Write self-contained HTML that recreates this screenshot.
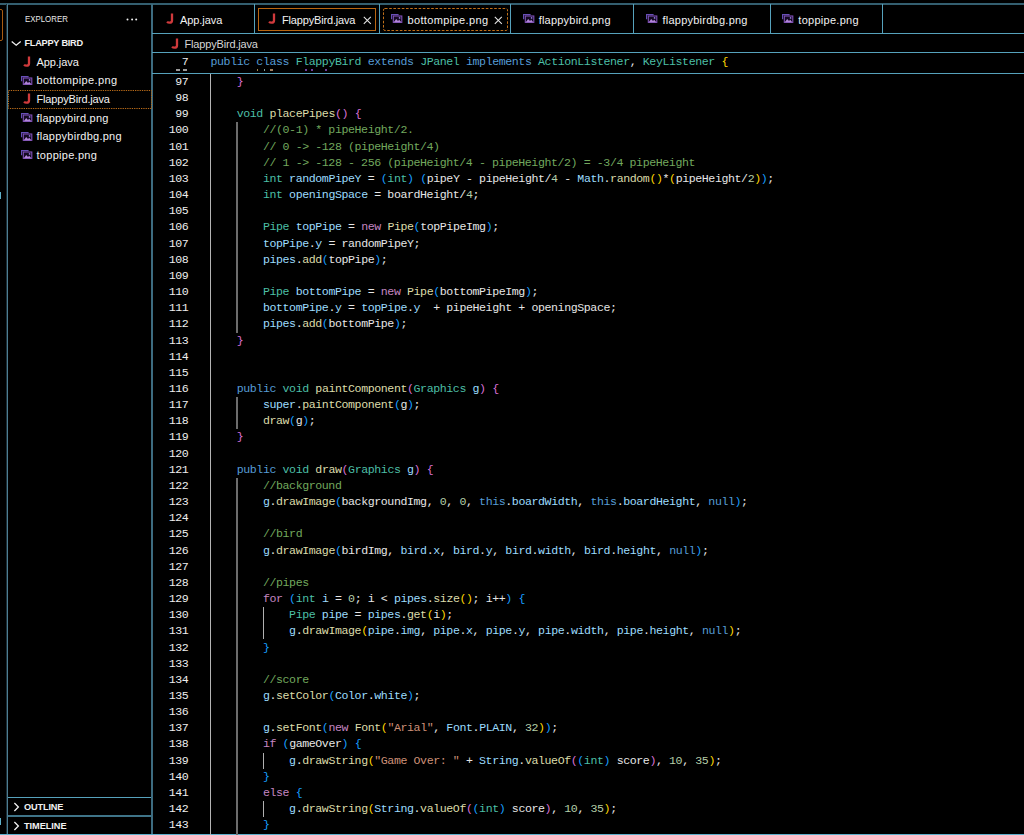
<!DOCTYPE html>
<html><head><meta charset="utf-8">
<style>
*{margin:0;padding:0;box-sizing:border-box}
html,body{width:1024px;height:835px;overflow:hidden;background:#000}
body{position:relative;font-family:"Liberation Sans",sans-serif;color:#f0f0f0}
.a{position:absolute}
.hb{position:absolute;background:#5aa9c4;height:1px}
.vb{position:absolute;background:#5aa9c4;width:1px}
.ui{position:absolute;font-size:11px;white-space:pre;line-height:14px;color:#f2f2f2}
.tab{position:absolute;top:4px;height:29px}
.code{position:absolute;font-family:"Liberation Mono",monospace;font-size:11.6px;letter-spacing:-0.41px;white-space:pre;line-height:16px;color:#e6e6e6}
.ln{position:absolute;font-family:"Liberation Mono",monospace;font-size:11.6px;letter-spacing:-0.41px;white-space:pre;line-height:16px;color:#eeeeee;text-align:right;width:60px;left:128.4px}
.k{color:#569cd6}.t{color:#4cbfa6}.c{color:#c586c0}.f{color:#dcdcaa}.v{color:#9cdcfe}
.cm{color:#72a85e}.n{color:#b5cea8}.s{color:#ce9178}
.b1{color:#ffd700}.b2{color:#da70d6}.b3{color:#179fff}
.g{position:absolute;width:1px;background:#b8b8b8}
</style></head><body>

<!-- global borders -->
<div class="a" style="left:0;top:3px;width:1024px;height:2px;background:#345f70"></div>
<div class="a" style="left:6px;top:4px;width:1px;height:831px;background:#1c2e36"></div><div class="a" style="left:7px;top:4px;width:1px;height:831px;background:#4d7d92"></div>
<div class="a" style="left:151px;top:4px;width:2px;height:831px;background:#3d6c80"></div>
<!-- activity bar active border -->
<div class="a" style="left:-4px;top:8.6px;width:7px;height:32px;border:1px solid #a85c12;border-radius:2px"></div>
<div class="a" style="left:0;top:192px;width:1px;height:7px;background:#5fb2ca"></div><div class="a" style="left:0;top:818px;width:1px;height:7px;background:#5fb2ca"></div>

<!-- sidebar -->
<div class="ui" style="left:24.8px;top:12.2px;font-size:9.6px;transform:scaleX(0.82);transform-origin:0 0;text-shadow:none;color:#e8e8e8">EXPLORER</div>
<svg class="a" style="left:124px;top:17px" width="16" height="5" viewBox="0 0 16 5"><circle cx="3.5" cy="2.6" r="1" fill="#f0f0f0"/><circle cx="8.1" cy="2.6" r="1" fill="#f0f0f0"/><circle cx="12.2" cy="2.6" r="1" fill="#f0f0f0"/></svg>

<svg class="a" style="left:11px;top:40px" width="11" height="7" viewBox="0 0 11 7"><path d="M0.7 1.6 L5.2 5.2 L9.7 1.6" fill="none" stroke="#f4f4f4" stroke-width="1.25"/></svg>
<div class="ui" style="left:24.5px;top:36px;font-size:9.2px;font-weight:bold;letter-spacing:-0.25px;text-shadow:none">FLAPPY BIRD</div>



<!-- outline / timeline -->
<div class="a" style="left:8px;top:797px;width:143px;height:1px;background:#56a2bc"></div>
<div class="a" style="left:8px;top:815px;width:143px;height:2px;background:#3f7488"></div>
<div class="a" style="left:0;top:834px;width:1024px;height:1px;background:#5eb0cc"></div>
<svg class="a" style="left:12px;top:802px" width="8" height="10" viewBox="0 0 8 10"><path d="M2.4 1 L6.4 5 L2.4 9" fill="none" stroke="#f4f4f4" stroke-width="1.25"/></svg>
<div class="ui" style="left:24px;top:800px;font-size:9.2px;font-weight:bold;letter-spacing:-0.15px">OUTLINE</div>
<svg class="a" style="left:12px;top:820.5px" width="8" height="10" viewBox="0 0 8 10"><path d="M2.4 1 L6.4 5 L2.4 9" fill="none" stroke="#f4f4f4" stroke-width="1.25"/></svg>
<div class="ui" style="left:24px;top:818.5px;font-size:9.2px;font-weight:bold;letter-spacing:-0.05px">TIMELINE</div>

<!-- tabs -->


<!-- breadcrumb / sticky -->
<div class="a" style="left:152px;top:33px;width:872px;height:1px;background:#56a2bc"></div>
<div class="a" style="left:152px;top:52px;width:872px;height:1px;background:#56a2bc"></div>
<div class="a" style="left:152px;top:73px;width:872px;height:1px;background:#56a2bc"></div>

<svg class="a" style="left:22.7px;top:55.5px" width="9" height="12" viewBox="0 0 9 12"><path d="M6 0.6 V7.4 Q6 9.7 3.6 9.7 Q1.9 9.7 1.1 8.6" fill="none" stroke="#d03a3c" stroke-width="2.3"/></svg>
<div class="ui" style="left:36.5px;top:54.70px;letter-spacing:-0.07px">App.java</div>
<svg class="a" style="left:20.6px;top:75.7px" width="12" height="10" viewBox="0 0 12 10"><path d="M0.6 5.2 V0.6 H7.6" fill="none" stroke="#6850b8" stroke-width="1.15"/><rect x="2.3" y="2" width="8.5" height="6.4" fill="#140a22" stroke="#8050b8" stroke-width="1.1"/><path d="M2.8 8.3 L5.2 5 L7 6.9 L8.2 5.8 L10.3 8.3 Z" fill="#b184d8"/><circle cx="8.6" cy="3.9" r="0.85" fill="#9078d8"/></svg>
<div class="ui" style="left:36.5px;top:73.30px;letter-spacing:0.36px">bottompipe.png</div>
<svg class="a" style="left:22.7px;top:92.7px" width="9" height="12" viewBox="0 0 9 12"><path d="M6 0.6 V7.4 Q6 9.7 3.6 9.7 Q1.9 9.7 1.1 8.6" fill="none" stroke="#d03a3c" stroke-width="2.3"/></svg>
<div class="ui" style="left:36.5px;top:91.90px;letter-spacing:-0.17px">FlappyBird.java</div>
<svg class="a" style="left:20.6px;top:112.9px" width="12" height="10" viewBox="0 0 12 10"><path d="M0.6 5.2 V0.6 H7.6" fill="none" stroke="#6850b8" stroke-width="1.15"/><rect x="2.3" y="2" width="8.5" height="6.4" fill="#140a22" stroke="#8050b8" stroke-width="1.1"/><path d="M2.8 8.3 L5.2 5 L7 6.9 L8.2 5.8 L10.3 8.3 Z" fill="#b184d8"/><circle cx="8.6" cy="3.9" r="0.85" fill="#9078d8"/></svg>
<div class="ui" style="left:36.5px;top:110.50px;letter-spacing:0.21px">flappybird.png</div>
<svg class="a" style="left:20.6px;top:131.5px" width="12" height="10" viewBox="0 0 12 10"><path d="M0.6 5.2 V0.6 H7.6" fill="none" stroke="#6850b8" stroke-width="1.15"/><rect x="2.3" y="2" width="8.5" height="6.4" fill="#140a22" stroke="#8050b8" stroke-width="1.1"/><path d="M2.8 8.3 L5.2 5 L7 6.9 L8.2 5.8 L10.3 8.3 Z" fill="#b184d8"/><circle cx="8.6" cy="3.9" r="0.85" fill="#9078d8"/></svg>
<div class="ui" style="left:36.5px;top:129.10px;letter-spacing:0.25px">flappybirdbg.png</div>
<svg class="a" style="left:20.6px;top:150.1px" width="12" height="10" viewBox="0 0 12 10"><path d="M0.6 5.2 V0.6 H7.6" fill="none" stroke="#6850b8" stroke-width="1.15"/><rect x="2.3" y="2" width="8.5" height="6.4" fill="#140a22" stroke="#8050b8" stroke-width="1.1"/><path d="M2.8 8.3 L5.2 5 L7 6.9 L8.2 5.8 L10.3 8.3 Z" fill="#b184d8"/><circle cx="8.6" cy="3.9" r="0.85" fill="#9078d8"/></svg>
<div class="ui" style="left:36.5px;top:147.70px;letter-spacing:0.28px">toppipe.png</div>
<svg class="a" style="left:8px;top:90px" width="144" height="19" viewBox="0 0 144 19"><rect x="0.5" y="0.5" width="143" height="18" fill="none" stroke="#b86a18" stroke-width="1" stroke-dasharray="1.3 1"/></svg>
<div class="a" style="left:254px;top:4px;width:1px;height:29px;background:#56a2bc"></div>
<div class="a" style="left:379px;top:4px;width:1px;height:29px;background:#56a2bc"></div>
<div class="a" style="left:510px;top:4px;width:1px;height:29px;background:#56a2bc"></div>
<div class="a" style="left:633px;top:4px;width:1px;height:29px;background:#56a2bc"></div>
<div class="a" style="left:770px;top:4px;width:1px;height:29px;background:#56a2bc"></div>
<div class="a" style="left:882px;top:4px;width:1px;height:29px;background:#56a2bc"></div>
<svg class="a" style="left:165.7px;top:13.0px" width="9" height="12" viewBox="0 0 9 12"><path d="M6 0.6 V7.4 Q6 9.7 3.6 9.7 Q1.9 9.7 1.1 8.6" fill="none" stroke="#d03a3c" stroke-width="2.3"/></svg>
<div class="ui" style="left:180px;top:12.8px;letter-spacing:-0.07px">App.java</div>
<svg class="a" style="left:268.2px;top:13.0px" width="9" height="12" viewBox="0 0 9 12"><path d="M6 0.6 V7.4 Q6 9.7 3.6 9.7 Q1.9 9.7 1.1 8.6" fill="none" stroke="#d03a3c" stroke-width="2.3"/></svg>
<div class="ui" style="left:282px;top:12.8px;letter-spacing:-0.17px">FlappyBird.java</div>
<svg class="a" style="left:363px;top:16px" width="9" height="9" viewBox="0 0 9 9"><path d="M0.8 0.8 L7.8 7.8 M7.8 0.8 L0.8 7.8" stroke="#e6e6e6" stroke-width="1.05"/></svg>
<svg class="a" style="left:390.6px;top:13.9px" width="12" height="10" viewBox="0 0 12 10"><path d="M0.6 5.2 V0.6 H7.6" fill="none" stroke="#6850b8" stroke-width="1.15"/><rect x="2.3" y="2" width="8.5" height="6.4" fill="#140a22" stroke="#8050b8" stroke-width="1.1"/><path d="M2.8 8.3 L5.2 5 L7 6.9 L8.2 5.8 L10.3 8.3 Z" fill="#b184d8"/><circle cx="8.6" cy="3.9" r="0.85" fill="#9078d8"/></svg>
<div class="ui" style="left:407.5px;top:12.8px;letter-spacing:0.36px">bottompipe.png</div>
<svg class="a" style="left:494.2px;top:16px" width="9" height="9" viewBox="0 0 9 9"><path d="M0.8 0.8 L7.8 7.8 M7.8 0.8 L0.8 7.8" stroke="#e6e6e6" stroke-width="1.05"/></svg>
<svg class="a" style="left:522.6px;top:13.9px" width="12" height="10" viewBox="0 0 12 10"><path d="M0.6 5.2 V0.6 H7.6" fill="none" stroke="#6850b8" stroke-width="1.15"/><rect x="2.3" y="2" width="8.5" height="6.4" fill="#140a22" stroke="#8050b8" stroke-width="1.1"/><path d="M2.8 8.3 L5.2 5 L7 6.9 L8.2 5.8 L10.3 8.3 Z" fill="#b184d8"/><circle cx="8.6" cy="3.9" r="0.85" fill="#9078d8"/></svg>
<div class="ui" style="left:538.7px;top:12.8px;letter-spacing:0.21px">flappybird.png</div>
<svg class="a" style="left:645.6px;top:13.9px" width="12" height="10" viewBox="0 0 12 10"><path d="M0.6 5.2 V0.6 H7.6" fill="none" stroke="#6850b8" stroke-width="1.15"/><rect x="2.3" y="2" width="8.5" height="6.4" fill="#140a22" stroke="#8050b8" stroke-width="1.1"/><path d="M2.8 8.3 L5.2 5 L7 6.9 L8.2 5.8 L10.3 8.3 Z" fill="#b184d8"/><circle cx="8.6" cy="3.9" r="0.85" fill="#9078d8"/></svg>
<div class="ui" style="left:662.4px;top:12.8px;letter-spacing:0.25px">flappybirdbg.png</div>
<svg class="a" style="left:781.9px;top:13.9px" width="12" height="10" viewBox="0 0 12 10"><path d="M0.6 5.2 V0.6 H7.6" fill="none" stroke="#6850b8" stroke-width="1.15"/><rect x="2.3" y="2" width="8.5" height="6.4" fill="#140a22" stroke="#8050b8" stroke-width="1.1"/><path d="M2.8 8.3 L5.2 5 L7 6.9 L8.2 5.8 L10.3 8.3 Z" fill="#b184d8"/><circle cx="8.6" cy="3.9" r="0.85" fill="#9078d8"/></svg>
<div class="ui" style="left:798.3px;top:12.8px;letter-spacing:0.28px">toppipe.png</div>
<div class="a" style="left:258px;top:8px;width:118px;height:23px;border:1px solid #b86612"></div>
<svg class="a" style="left:383px;top:7.5px" width="125" height="23" viewBox="0 0 125 23"><rect x="0.5" y="0.5" width="124" height="22" rx="1.5" fill="none" stroke="#c0701a" stroke-width="1" stroke-dasharray="2.6 1.6"/></svg>
<svg class="a" style="left:171.2px;top:38.2px" width="9" height="12" viewBox="0 0 9 12"><path d="M6 0.6 V7.4 Q6 9.7 3.6 9.7 Q1.9 9.7 1.1 8.6" fill="none" stroke="#d03a3c" stroke-width="2.3"/></svg>
<div class="ui" style="left:184.5px;top:36.5px;letter-spacing:-0.17px;color:#d6d6d6;text-shadow:none">FlappyBird.java</div>
<div class="a" style="left:210px;top:74px;width:1px;height:761px;background:#b4b4b4"></div>
<div class="a" style="left:236px;top:122.47px;width:2px;height:210.04px;background:#6c6c6c"></div>
<div class="a" style="left:236px;top:397.14px;width:2px;height:32.31px;background:#6c6c6c"></div>
<div class="a" style="left:236px;top:477.93px;width:2px;height:371.61px;background:#6c6c6c"></div>
<div class="a" style="left:263px;top:607.18px;width:1px;height:32.31px;background:#b0b0b0"></div>
<div class="a" style="left:263px;top:752.59px;width:1px;height:16.16px;background:#b0b0b0"></div>
<div class="a" style="left:263px;top:801.07px;width:1px;height:16.16px;background:#b0b0b0"></div>
<div class="ln" style="top:74.00px">97</div>
<div class="code" style="left:210.5px;top:74.00px">    <span class="b2">}</span></div>
<div class="ln" style="top:90.16px">98</div>
<div class="ln" style="top:106.31px">99</div>
<div class="code" style="left:210.5px;top:106.31px">    <span class="t">void</span> <span class="f">placePipes</span><span class="b2">()</span> <span class="b2">{</span></div>
<div class="ln" style="top:122.47px">100</div>
<div class="code" style="left:210.5px;top:122.47px">        <span class="cm">//(0-1) * pipeHeight/2.</span></div>
<div class="ln" style="top:138.63px">101</div>
<div class="code" style="left:210.5px;top:138.63px">        <span class="cm">// 0 -&gt; -128 (pipeHeight/4)</span></div>
<div class="ln" style="top:154.78px">102</div>
<div class="code" style="left:210.5px;top:154.78px">        <span class="cm">// 1 -&gt; -128 - 256 (pipeHeight/4 - pipeHeight/2) = -3/4 pipeHeight</span></div>
<div class="ln" style="top:170.94px">103</div>
<div class="code" style="left:210.5px;top:170.94px">        <span class="t">int</span> <span class="v">randomPipeY</span> = <span class="b3">(</span><span class="t">int</span><span class="b3">)</span> <span class="b3">(</span>pipeY - pipeHeight/<span class="n">4</span> - <span class="v">Math</span>.<span class="f">random</span><span class="b1">()</span>*<span class="b1">(</span>pipeHeight/<span class="n">2</span><span class="b1">)</span><span class="b3">)</span>;</div>
<div class="ln" style="top:187.10px">104</div>
<div class="code" style="left:210.5px;top:187.10px">        <span class="t">int</span> <span class="v">openingSpace</span> = boardHeight/<span class="n">4</span>;</div>
<div class="ln" style="top:203.26px">105</div>
<div class="ln" style="top:219.41px">106</div>
<div class="code" style="left:210.5px;top:219.41px">        <span class="t">Pipe</span> <span class="v">topPipe</span> = <span class="c">new</span> <span class="f">Pipe</span><span class="b3">(</span>topPipeImg<span class="b3">)</span>;</div>
<div class="ln" style="top:235.57px">107</div>
<div class="code" style="left:210.5px;top:235.57px">        <span class="v">topPipe</span>.<span class="v">y</span> = randomPipeY;</div>
<div class="ln" style="top:251.73px">108</div>
<div class="code" style="left:210.5px;top:251.73px">        <span class="v">pipes</span>.<span class="f">add</span><span class="b3">(</span>topPipe<span class="b3">)</span>;</div>
<div class="ln" style="top:267.88px">109</div>
<div class="ln" style="top:284.04px">110</div>
<div class="code" style="left:210.5px;top:284.04px">        <span class="t">Pipe</span> <span class="v">bottomPipe</span> = <span class="c">new</span> <span class="f">Pipe</span><span class="b3">(</span>bottomPipeImg<span class="b3">)</span>;</div>
<div class="ln" style="top:300.20px">111</div>
<div class="code" style="left:210.5px;top:300.20px">        <span class="v">bottomPipe</span>.<span class="v">y</span> = <span class="v">topPipe</span>.<span class="v">y</span>  + pipeHeight + openingSpace;</div>
<div class="ln" style="top:316.36px">112</div>
<div class="code" style="left:210.5px;top:316.36px">        <span class="v">pipes</span>.<span class="f">add</span><span class="b3">(</span>bottomPipe<span class="b3">)</span>;</div>
<div class="ln" style="top:332.51px">113</div>
<div class="code" style="left:210.5px;top:332.51px">    <span class="b2">}</span></div>
<div class="ln" style="top:348.67px">114</div>
<div class="ln" style="top:364.83px">115</div>
<div class="ln" style="top:380.98px">116</div>
<div class="code" style="left:210.5px;top:380.98px">    <span class="k">public</span> <span class="t">void</span> <span class="f">paintComponent</span><span class="b2">(</span><span class="t">Graphics</span> <span class="v">g</span><span class="b2">)</span> <span class="b2">{</span></div>
<div class="ln" style="top:397.14px">117</div>
<div class="code" style="left:210.5px;top:397.14px">        <span class="v">super</span>.<span class="f">paintComponent</span><span class="b3">(</span>g<span class="b3">)</span>;</div>
<div class="ln" style="top:413.30px">118</div>
<div class="code" style="left:210.5px;top:413.30px">        <span class="f">draw</span><span class="b3">(</span>g<span class="b3">)</span>;</div>
<div class="ln" style="top:429.45px">119</div>
<div class="code" style="left:210.5px;top:429.45px">    <span class="b2">}</span></div>
<div class="ln" style="top:445.61px">120</div>
<div class="ln" style="top:461.77px">121</div>
<div class="code" style="left:210.5px;top:461.77px">    <span class="k">public</span> <span class="t">void</span> <span class="f">draw</span><span class="b2">(</span><span class="t">Graphics</span> <span class="v">g</span><span class="b2">)</span> <span class="b2">{</span></div>
<div class="ln" style="top:477.93px">122</div>
<div class="code" style="left:210.5px;top:477.93px">        <span class="cm">//background</span></div>
<div class="ln" style="top:494.08px">123</div>
<div class="code" style="left:210.5px;top:494.08px">        <span class="v">g</span>.<span class="f">drawImage</span><span class="b3">(</span>backgroundImg, <span class="n">0</span>, <span class="n">0</span>, <span class="k">this</span>.<span class="v">boardWidth</span>, <span class="k">this</span>.<span class="v">boardHeight</span>, <span class="k">null</span><span class="b3">)</span>;</div>
<div class="ln" style="top:510.24px">124</div>
<div class="ln" style="top:526.40px">125</div>
<div class="code" style="left:210.5px;top:526.40px">        <span class="cm">//bird</span></div>
<div class="ln" style="top:542.55px">126</div>
<div class="code" style="left:210.5px;top:542.55px">        <span class="v">g</span>.<span class="f">drawImage</span><span class="b3">(</span>birdImg, <span class="v">bird</span>.<span class="v">x</span>, <span class="v">bird</span>.<span class="v">y</span>, <span class="v">bird</span>.<span class="v">width</span>, <span class="v">bird</span>.<span class="v">height</span>, <span class="k">null</span><span class="b3">)</span>;</div>
<div class="ln" style="top:558.71px">127</div>
<div class="ln" style="top:574.87px">128</div>
<div class="code" style="left:210.5px;top:574.87px">        <span class="cm">//pipes</span></div>
<div class="ln" style="top:591.02px">129</div>
<div class="code" style="left:210.5px;top:591.02px">        <span class="c">for</span> <span class="b3">(</span><span class="t">int</span> <span class="v">i</span> = <span class="n">0</span>; i &lt; <span class="v">pipes</span>.<span class="f">size</span><span class="b1">()</span>; i++<span class="b3">)</span> <span class="b3">{</span></div>
<div class="ln" style="top:607.18px">130</div>
<div class="code" style="left:210.5px;top:607.18px">            <span class="t">Pipe</span> <span class="v">pipe</span> = <span class="v">pipes</span>.<span class="f">get</span><span class="b1">(</span>i<span class="b1">)</span>;</div>
<div class="ln" style="top:623.34px">131</div>
<div class="code" style="left:210.5px;top:623.34px">            <span class="v">g</span>.<span class="f">drawImage</span><span class="b1">(</span><span class="v">pipe</span>.<span class="v">img</span>, <span class="v">pipe</span>.<span class="v">x</span>, <span class="v">pipe</span>.<span class="v">y</span>, <span class="v">pipe</span>.<span class="v">width</span>, <span class="v">pipe</span>.<span class="v">height</span>, <span class="k">null</span><span class="b1">)</span>;</div>
<div class="ln" style="top:639.50px">132</div>
<div class="code" style="left:210.5px;top:639.50px">        <span class="b3">}</span></div>
<div class="ln" style="top:655.65px">133</div>
<div class="ln" style="top:671.81px">134</div>
<div class="code" style="left:210.5px;top:671.81px">        <span class="cm">//score</span></div>
<div class="ln" style="top:687.97px">135</div>
<div class="code" style="left:210.5px;top:687.97px">        <span class="v">g</span>.<span class="f">setColor</span><span class="b3">(</span><span class="v">Color</span>.<span class="v">white</span><span class="b3">)</span>;</div>
<div class="ln" style="top:704.12px">136</div>
<div class="ln" style="top:720.28px">137</div>
<div class="code" style="left:210.5px;top:720.28px">        <span class="v">g</span>.<span class="f">setFont</span><span class="b3">(</span><span class="c">new</span> <span class="f">Font</span><span class="b1">(</span><span class="s">&quot;Arial&quot;</span>, <span class="v">Font</span>.<span class="v">PLAIN</span>, <span class="n">32</span><span class="b1">)</span><span class="b3">)</span>;</div>
<div class="ln" style="top:736.44px">138</div>
<div class="code" style="left:210.5px;top:736.44px">        <span class="c">if</span> <span class="b3">(</span>gameOver<span class="b3">)</span> <span class="b3">{</span></div>
<div class="ln" style="top:752.59px">139</div>
<div class="code" style="left:210.5px;top:752.59px">            <span class="v">g</span>.<span class="f">drawString</span><span class="b1">(</span><span class="s">&quot;Game Over: &quot;</span> + <span class="v">String</span>.<span class="f">valueOf</span><span class="b2">(</span><span class="b3">(</span><span class="t">int</span><span class="b3">)</span> score<span class="b2">)</span>, <span class="n">10</span>, <span class="n">35</span><span class="b1">)</span>;</div>
<div class="ln" style="top:768.75px">140</div>
<div class="code" style="left:210.5px;top:768.75px">        <span class="b3">}</span></div>
<div class="ln" style="top:784.91px">141</div>
<div class="code" style="left:210.5px;top:784.91px">        <span class="c">else</span> <span class="b3">{</span></div>
<div class="ln" style="top:801.07px">142</div>
<div class="code" style="left:210.5px;top:801.07px">            <span class="v">g</span>.<span class="f">drawString</span><span class="b1">(</span><span class="v">String</span>.<span class="f">valueOf</span><span class="b2">(</span><span class="b3">(</span><span class="t">int</span><span class="b3">)</span> score<span class="b2">)</span>, <span class="n">10</span>, <span class="n">35</span><span class="b1">)</span>;</div>
<div class="ln" style="top:817.22px">143</div>
<div class="code" style="left:210.5px;top:817.22px">        <span class="b3">}</span></div>
<div class="a" style="left:153px;top:53px;width:871px;height:20px;background:#000"></div>
<div class="ln" style="top:54px">7</div>
<div class="code" style="left:210.5px;top:54px"><span class="k">public</span> <span class="k">class</span> <span class="t">FlappyBird</span> <span class="k">extends</span> <span class="t">JPanel</span> <span class="k">implements</span> <span class="t">ActionListener</span>, <span class="t">KeyListener</span> <span class="b1">{</span></div>
<div class="a" style="left:176px;top:69px;width:3.5px;height:1.5px;background:#9a9a9a"></div>
<div class="a" style="left:183px;top:69px;width:4px;height:1.5px;background:#9a9a9a"></div>
<div class="a" style="left:257px;top:69px;width:1.2px;height:1.5px;background:#a08850"></div>
<div class="a" style="left:263.5px;top:69px;width:1.2px;height:1.5px;background:#80a0a0"></div>
<div class="a" style="left:270px;top:69px;width:2.5px;height:1.5px;background:#a08060"></div>
<div class="a" style="left:305px;top:69px;width:2px;height:1.5px;background:#7040a0"></div>
<div class="a" style="left:310.5px;top:69px;width:2px;height:1.5px;background:#7040a0"></div>
<div class="a" style="left:325px;top:69px;width:2px;height:1.5px;background:#7040a0"></div>

</body></html>
